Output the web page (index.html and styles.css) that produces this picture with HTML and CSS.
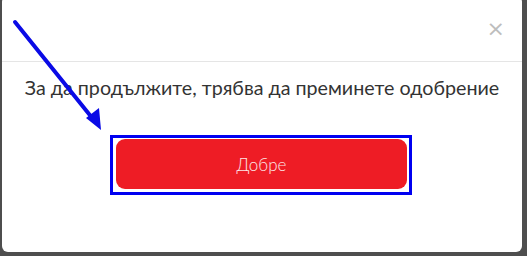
FILE: index.html
```html
<!DOCTYPE html>
<html lang="bg">
<head>
<meta charset="utf-8">
<link rel="stylesheet" href="styles.css">
</head>
<body>
<div class="modal">
  <div class="modal-header">
    <span class="close">&times;</span>
  </div>
  <div class="modal-body">
    <p class="message">За да продължите, трябва да преминете одобрение</p>
    <div class="highlight">
      <button class="btn-ok">Добре</button>
    </div>
  </div>
</div>
<svg class="arrow" width="120" height="140" viewBox="0 0 120 140">
  <line x1="15" y1="22" x2="93" y2="119" stroke="#0a0ae6" stroke-width="4" stroke-linecap="round"/>
  <polygon points="101,130 86,118 99,108" fill="#0a0ae6"/>
</svg>
</body>
</html>
```
FILE: styles.css
```css
html, body {
  margin: 0;
  padding: 0;
}
body {
  background: #4e4e4e;
  width: 527px;
  height: 256px;
  overflow: hidden;
  position: relative;
  font-family: Lato, "Noto Sans", sans-serif;
}
.modal {
  margin-left: 2px;
  margin-top: -4px;
  width: 520px;
  height: 256px;
  background: #fff;
  border-radius: 6px;
  display: flex;
  flex-direction: column;
}
.modal-header {
  height: 66px;
  box-sizing: border-box;
  border-bottom: 1px solid #e5e5e5;
  display: flex;
  justify-content: flex-end;
  align-items: center;
  padding-right: 17px;
  padding-top: 1px;
}
.close {
  color: #bdbdbd;
  font-family: "DejaVu Sans", sans-serif;
  font-size: 22px;
  line-height: 1;
}
.modal-body {
  display: flex;
  flex-direction: column;
  align-items: center;
}
.message {
  margin: 13px 0 0;
  font-size: 19.7px;
  line-height: 26px;
  color: #333;
}
.highlight {
  margin-top: 34px;
  border: 3px solid #0000f0;
  padding: 1px 2px 3px 3px;
  margin-left: -2px;
}
.btn-ok {
  display: block;
  width: 291px;
  height: 50px;
  border: none;
  border-radius: 9px;
  background: #ee1c25;
  color: #fde8e8;
  font-family: Lato, "Noto Sans", sans-serif;
  font-size: 17px;
  font-weight: 300;
  padding: 0;
}
.arrow {
  position: absolute;
  left: 0;
  top: 0;
}
```
